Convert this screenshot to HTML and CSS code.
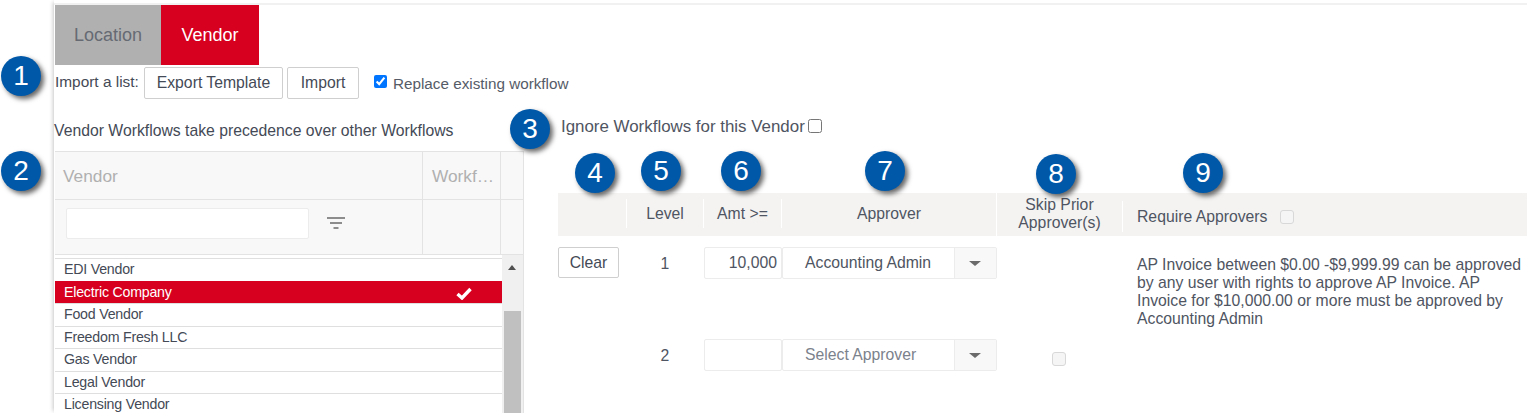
FILE: index.html
```html
<!DOCTYPE html>
<html lang="en">
<head>
  <meta charset="UTF-8" />
  <title>Vendor Workflows</title>
  <link rel="stylesheet" href="styles.css">
</head>
<body>

  <div class="pagina">
    <div class="izquierda">
      <div class="tabs">
        <div class="tab tab-gris">Location</div>
        <div class="tab tab-activa">Vendor</div>
      </div>

      <div class="importar">
        <span class="importar-label">Import a list:</span>
        <button class="btn btn-export">Export Template</button>
        <button class="btn btn-import">Import</button>
        <input type="checkbox" class="check-azul" checked />
        <span class="replace">Replace existing workflow</span>
      </div>

      <p class="nota">Vendor Workflows take precedence over other Workflows</p>

      <div class="grid-vendor">
        <div class="cabecera">
          <div class="cab-vendor">Vendor</div>
          <div class="cab-work">Workf…</div>
          <div class="cab-vacia"></div>
        </div>
        <div class="filtro">
          <div class="filtro-vendor">
            <input type="text" class="filtro-input" />
            <svg class="filtro-icono" width="18" height="13" viewBox="0 0 18 13">
              <rect x="0" y="0" width="18" height="2" fill="#8d8d8d" />
              <rect x="3" y="5" width="12" height="2" fill="#8d8d8d" />
              <rect x="6.500" y="10" width="5" height="2" fill="#8d8d8d" />
            </svg>
          </div>
          <div class="filtro-work"></div>
          <div class="cab-vacia"></div>
        </div>
        <div class="lista-wrap">
          <div class="lista">
            <div class="fila">EDI Vendor</div>
            <div class="fila fila-activa">Electric Company
              <svg class="tilde" width="16" height="13" viewBox="0 0 16 13">
                <path d="M1.500 7 L6 11 L14.500 2" fill="none" stroke="#fff" stroke-width="3.400" />
              </svg>
            </div>
            <div class="fila">Food Vendor</div>
            <div class="fila">Freedom Fresh LLC</div>
            <div class="fila">Gas Vendor</div>
            <div class="fila">Legal Vendor</div>
            <div class="fila">Licensing Vendor</div>
          </div>
          <div class="scroll">
            <div class="scroll-flecha"></div>
            <div class="scroll-barra"></div>
          </div>
        </div>
      </div>
    </div>

    <div class="derecha">
      <div class="ignorar">
        <span>Ignore Workflows for this Vendor</span>
        <input type="checkbox" class="check-ignorar" />
      </div>

      <div class="tabla tabla-cab">
        <div class="col"></div>
        <div class="col sep">Level</div>
        <div class="col sep">Amt &gt;=</div>
        <div class="col sep">Approver</div>
        <div class="col sep skip">Skip Prior<br>Approver(s)</div>
        <div class="col col-req sep">Require Approvers <input type="checkbox" class="check-gris" /></div>
      </div>

      <div class="tabla fila-uno">
        <div><button class="btn btn-clear">Clear</button></div>
        <div class="nivel">1</div>
        <div class="monto">10,000</div>
        <div class="selector">
          <span class="selector-texto">Accounting Admin</span>
          <span class="selector-flecha"></span>
        </div>
        <div></div>
        <div class="descripcion">AP Invoice between $0.00 -$9,999.99 can be approved by any user with rights to approve AP Invoice. AP Invoice for $10,000.00 or more must be approved by Accounting Admin</div>
      </div>

      <div class="tabla fila-dos">
        <div></div>
        <div class="nivel">2</div>
        <div class="monto"></div>
        <div class="selector">
          <span class="selector-texto apagado">Select Approver</span>
          <span class="selector-flecha"></span>
        </div>
        <div class="celda-check"><input type="checkbox" class="check-gris" /></div>
        <div></div>
      </div>
    </div>

    <!-- numeros de ayuda encima de la pantalla -->
    <span class="marca m1">1</span>
    <span class="marca m2">2</span>
    <span class="marca m3">3</span>
    <span class="marca m4">4</span>
    <span class="marca m5">5</span>
    <span class="marca m6">6</span>
    <span class="marca m7">7</span>
    <span class="marca m8">8</span>
    <span class="marca m9">9</span>
  </div>

</body>
</html>
```

FILE: styles.css
```css
html, body {
  margin: 0;
  height: 413px;
  overflow: hidden;
  background: #fff;
}
body {
  font-family: "Liberation Sans", Arial, sans-serif;
  font-size: 15.750px;
  color: #4f5562;
}
.pagina {
  position: relative;
  display: flex;
  height: 413px;
  padding-left: 54px;
  box-sizing: border-box;
}
.pagina::before {
  content: "";
  position: absolute;
  left: 54px;
  right: 0;
  top: 3px;
  height: 2px;
  background: #f1f1f1;
}
.izquierda {
  position: relative;
  width: 470px;
  flex: none;
  padding-top: 5px;
  box-sizing: border-box;
  box-shadow: -3px 0 4px -2px rgba(0, 0, 0, 0.22);
}
.tabs {
  display: flex;
  height: 60px;
  margin-left: 1px;
}
.tab {
  display: flex;
  align-items: center;
  justify-content: center;
  font-size: 18px;
  height: 60px;
}
.tab-gris {
  width: 106px;
  background: #b0b0b0;
  color: #666a73;
}
.tab-activa {
  width: 98px;
  background: #d7001e;
  color: #fff;
}
.importar {
  display: flex;
  align-items: center;
  height: 32px;
  margin-top: 2px;
  white-space: nowrap;
}
.importar > * {
  flex: none;
}
.importar-label {
  margin: -3px 0 0 1px;
  font-size: 15.400px;
  color: #444a56;
  width: 89px;
}
.btn {
  font-family: inherit;
  font-size: 15.750px;
  background: #fff;
  color: #444a56;
  border: 1px solid #cfcfcf;
  border-radius: 2px;
  padding: 0;
  box-sizing: border-box;
}
.btn-export {
  width: 139px;
  height: 32px;
}
.btn-import {
  width: 72px;
  height: 32px;
  margin-left: 4px;
}
.check-azul {
  width: 13px;
  height: 13px;
  margin: -3px 0 0 15px;
  accent-color: #0075ff;
}
.replace {
  margin: 1px 0 0 6px;
  font-size: 15.250px;
  color: #555b67;
}
.nota {
  margin: 23px 0 0 0;
  height: 18px;
  line-height: 18px;
  white-space: nowrap;
  color: #444a56;
}
.grid-vendor {
  margin-top: 11px;
  margin-left: 1px;
  border-top: 1px solid #e3e3e3;
  border-right: 1px solid #e3e3e3;
}
.cabecera, .filtro {
  display: flex;
  background: #f8f8f8;
  border-bottom: 1px solid #e3e3e3;
}
.cabecera {
  height: 47px;
  line-height: 49px;
  color: #b0b0b0;
  font-size: 17.300px;
}
.filtro {
  height: 54px;
}
.cab-vendor, .filtro-vendor {
  width: 368px;
  box-sizing: border-box;
  border-right: 1px solid #e3e3e3;
}
.cab-vendor {
  padding-left: 8px;
}
.cab-work, .filtro-work {
  width: 78px;
  box-sizing: border-box;
  border-right: 1px solid #e3e3e3;
  padding-left: 9px;
  white-space: nowrap;
  overflow: hidden;
}
.cab-vacia {
  flex: 1;
}
.filtro-vendor {
  display: flex;
  align-items: flex-start;
  padding: 8px 0 0 11px;
}
.filtro-input {
  width: 243px;
  height: 31px;
  box-sizing: border-box;
  border: 1px solid #ececec;
  border-radius: 2px;
  background: #fff;
}
.filtro-icono {
  margin: 9px 0 0 18px;
}
.lista-wrap {
  display: flex;
  height: 160px;
  overflow: hidden;
}
.lista {
  width: 447px;
  padding-top: 3px;
  flex: none;
}
.fila {
  position: relative;
  height: 21.500px;
  line-height: 20px;
  padding-left: 9px;
  border-top: 1px solid #dfdfdf;
  font-size: 14.200px;
  letter-spacing: -0.220px;
  color: #444a56;
}
.fila-activa {
  background: #d7001e;
  color: #fff;
  border-top-color: #d7001e;
}
.tilde {
  position: absolute;
  left: 401px;
  top: 5px;
}
.scroll {
  flex: 1;
  position: relative;
  background: #f0f0f0;
}
.scroll-flecha {
  width: 0;
  height: 0;
  margin: 10px 0 0 6px;
  border-left: 4.500px solid transparent;
  border-right: 4.500px solid transparent;
  border-bottom: 5px solid #505050;
}
.scroll-barra {
  width: 17px;
  height: 102px;
  margin: 41px 0 0 2px;
  background: #c0c0c0;
}
.derecha {
  flex: 1;
  min-width: 0;
  margin-left: 34px;
  padding-top: 115px;
}
.ignorar {
  display: flex;
  align-items: flex-start;
  height: 78px;
  padding-left: 3px;
  line-height: 24px;
  font-size: 16.900px;
  white-space: nowrap;
}
.check-ignorar {
  width: 14px;
  height: 14px;
  margin: 4px 0 0 3px;
}
.tabla {
  display: grid;
  grid-template-columns: 68px 77px 78px 215px 126px 1fr;
}
.tabla-cab {
  height: 43px;
  background: #f4f3f2;
}
.col {
  display: flex;
  align-items: center;
  justify-content: center;
  text-align: center;
  line-height: 18px;
  margin: 6px 0 8px;
}
.sep {
  border-left: 1px solid #fff;
}
.skip {
  margin: 0;
  padding-bottom: 1px;
  box-sizing: border-box;
}
.col-req {
  justify-content: flex-start;
  padding-left: 14px;
  margin: 8px 0 4px;
  white-space: nowrap;
}
.check-gris {
  appearance: none;
  width: 14px;
  height: 14px;
  margin: 0;
  border: 1px solid #d8d8d8;
  border-radius: 3px;
  background: #f5f5f5;
}
.col-req .check-gris {
  margin: 1px 0 0 13px;
}
.fila-uno {
  height: 92px;
  padding-top: 11px;
  box-sizing: content-box;
}
.fila-dos {
  height: 33px;
}
.btn-clear {
  width: 61px;
  height: 31px;
}
.nivel {
  height: 32px;
  line-height: 33px;
  text-align: center;
  padding-left: 1px;
}
.monto {
  width: 78px;
  height: 32px;
  box-sizing: border-box;
  border: 1px solid #ececec;
  border-radius: 2px;
  text-align: right;
  line-height: 30px;
  padding-right: 4px;
  margin-left: 1px;
}
.selector {
  display: flex;
  height: 32px;
  margin-left: 1px;
  width: 215px;
  box-sizing: border-box;
  border: 1px solid #ececec;
  border-radius: 2px;
}
.selector-texto {
  flex: 1;
  padding-left: 22px;
  line-height: 30px;
}
.apagado {
  color: #7c828c;
}
.selector-flecha {
  position: relative;
  width: 41px;
  background: #f8f8f8;
  border-left: 1px solid #ececec;
}
.selector-flecha::after {
  content: "";
  position: absolute;
  left: 14px;
  top: 13px;
  border-left: 6px solid transparent;
  border-right: 6px solid transparent;
  border-top: 5px solid #6b6b6b;
}
.celda-check {
  display: flex;
  justify-content: center;
  padding-top: 13px;
}
.descripcion {
  padding: 9px 0 0 15px;
  line-height: 18px;
}
.marca {
  position: absolute;
  width: 40px;
  height: 40px;
  border-radius: 50%;
  background: #0058a9;
  color: #fff;
  font-size: 28px;
  line-height: 40px;
  text-align: center;
  box-shadow: 3px 3px 5px rgba(0, 0, 0, 0.6);
}
.m1 { left: 1px; top: 56px; }
.m2 { left: 1px; top: 151px; }
.m3 { left: 510px; top: 109px; }
.m4 { left: 575px; top: 153px; }
.m5 { left: 641px; top: 151px; }
.m6 { left: 721px; top: 151px; }
.m7 { left: 865px; top: 151px; }
.m8 { left: 1036px; top: 154px; }
.m9 { left: 1183px; top: 153px; }
```
